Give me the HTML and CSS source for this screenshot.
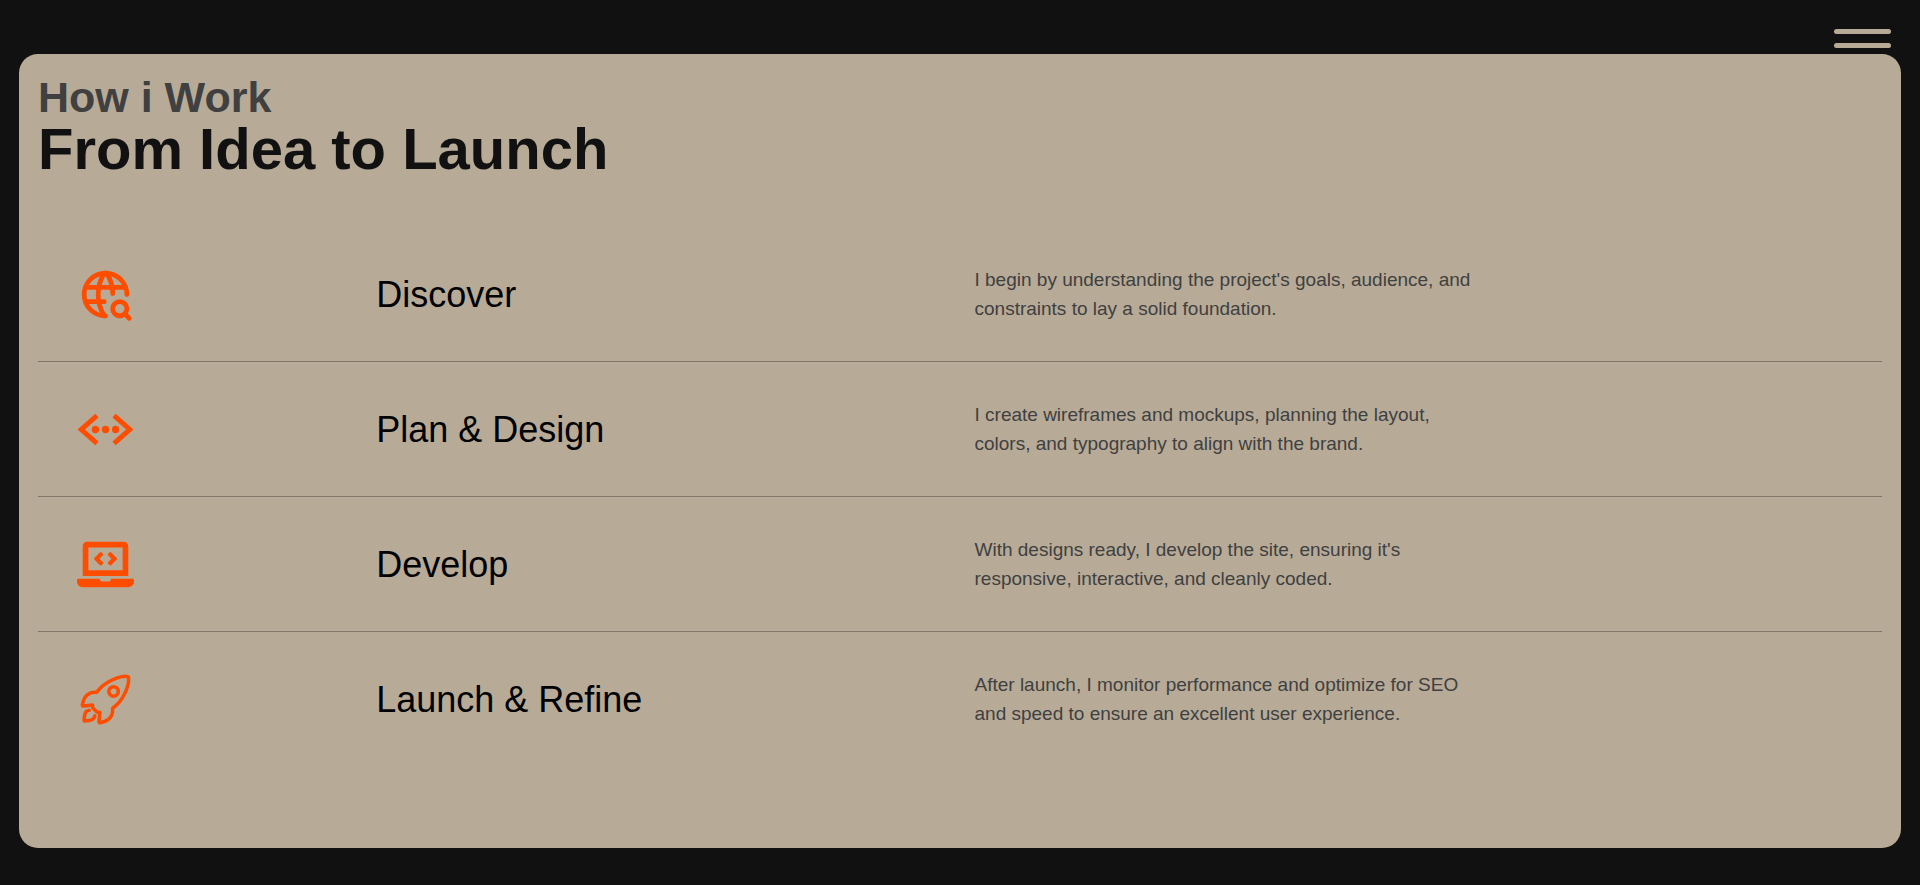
FILE: index.html
```html
<!DOCTYPE html>
<html lang="en">
<head>
<meta charset="utf-8">
<meta name="viewport" content="width=device-width, initial-scale=1">
<title>How i Work</title>
<link rel="stylesheet" href="styles.css">
</head>
<body>
<header class="topbar">
  <button class="menu-button" type="button" aria-label="Open menu">
    <span class="menu-bar"></span>
    <span class="menu-bar"></span>
  </button>
</header>
<main class="card">
  <h2 class="eyebrow">How i Work</h2>
  <h1 class="headline">From Idea to Launch</h1>
  <ol class="steps">
    <li class="step">
      <svg class="step-icon" viewBox="0 0 24 24" fill="none" stroke="currentColor" stroke-width="2" stroke-linecap="round" stroke-linejoin="round" aria-hidden="true">
        <path d="M21 12a9 9 0 1 0 -9 9"/>
        <path d="M3.6 9h16.8"/>
        <path d="M3.6 15h7.9"/>
        <path d="M11.5 3a17 17 0 0 0 0 18"/>
        <path d="M12.5 3a16.984 16.984 0 0 1 2.574 8.62"/>
        <circle cx="18" cy="18" r="3"/>
        <path d="M20.2 20.2l1.8 1.8"/>
      </svg>
      <h3 class="step-title">Discover</h3>
      <p class="step-text">I begin by understanding the project's goals, audience, and constraints to lay a solid foundation.</p>
    </li>
    <li class="step">
      <svg class="step-icon" viewBox="0 0 24 24" fill="none" stroke="currentColor" stroke-width="2.1" aria-hidden="true">
        <path d="M8.4 6.2L1.8 12l6.6 5.8"/>
        <path d="M15.6 6.2l6.6 5.8-6.6 5.8"/>
        <g fill="currentColor" stroke="none">
          <circle cx="7.75" cy="12" r="1.55"/>
          <circle cx="12" cy="12" r="1.55"/>
          <circle cx="16.25" cy="12" r="1.55"/>
        </g>
      </svg>
      <h3 class="step-title">Plan &amp; Design</h3>
      <p class="step-text">I create wireframes and mockups, planning the layout, colors, and typography to align with the brand.</p>
    </li>
    <li class="step">
      <svg class="step-icon" viewBox="0 0 640 512" fill="currentColor" aria-hidden="true">
        <path d="M255.03 261.65c6.25 6.25 16.38 6.25 22.63 0l11.31-11.31c6.25-6.25 6.25-16.38 0-22.63L253.25 192l35.71-35.72c6.25-6.25 6.25-16.38 0-22.63l-11.31-11.31c-6.25-6.25-16.38-6.25-22.63 0l-58.34 58.34c-6.25 6.25-6.25 16.38 0 22.63l58.35 58.34zm96.01-11.3l11.31 11.31c6.25 6.25 16.38 6.25 22.63 0l58.34-58.34c6.25-6.25 6.25-16.38 0-22.63l-58.34-58.34c-6.25-6.25-16.38-6.25-22.63 0l-11.31 11.31c-6.25 6.25-6.25 16.38 0 22.63L386.75 192l-35.71 35.72c-6.25 6.25-6.25 16.38 0 22.63zM624 416H381.54c-.74 19.81-14.71 32-32.74 32H288c-18.69 0-33.02-17.47-32.77-32H16c-8.8 0-16 7.2-16 16v16c0 35.2 28.8 64 64 64h512c35.2 0 64-28.8 64-64v-16c0-8.8-7.2-16-16-16zM576 48c0-26.4-21.6-48-48-48H112C85.6 0 64 21.6 64 48v336h512V48zm-64 272H128V64h384v256z"/>
      </svg>
      <h3 class="step-title">Develop</h3>
      <p class="step-text">With designs ready, I develop the site, ensuring it's responsive, interactive, and cleanly coded.</p>
    </li>
    <li class="step">
      <svg class="step-icon" viewBox="0 0 512 512" fill="none" stroke="currentColor" stroke-width="32" stroke-linecap="round" stroke-linejoin="round" aria-hidden="true">
        <path d="M461.81 53.81a4.4 4.4 0 00-3.3-3.39c-54.38-13.3-180 34.09-248.13 102.17a294.9 294.9 0 00-33.09 39.08c-21-1.9-42-.3-59.88 7.5-50.49 22.2-65.18 80.18-69.28 105.07a9 9 0 009.8 10.4l81.07-8.9a180.29 180.29 0 001.1 18.3 18.15 18.15 0 005.3 11.09l31.39 31.39a18.15 18.15 0 0011.1 5.3 179.91 179.91 0 0018.19 1.1l-8.89 81a9 9 0 0010.39 9.79c24.9-4 83-18.69 105.07-69.17 7.8-17.9 9.4-38.79 7.6-59.69a293.91 293.91 0 0039.19-33.09c68.38-68 115.47-190.86 102.37-247.95zM298.66 213.67a42.7 42.7 0 1160.38 0 42.65 42.65 0 01-60.38 0z"/>
        <path d="M109.64 352a45.06 45.06 0 00-26.35 12.84C65.67 382.52 64 448 64 448s65.52-1.67 83.15-19.31A44.73 44.73 0 00160 402.32"/>
      </svg>
      <h3 class="step-title">Launch &amp; Refine</h3>
      <p class="step-text">After launch, I monitor performance and optimize for SEO and speed to ensure an excellent user experience.</p>
    </li>
  </ol>
</main>
</body>
</html>
```

FILE: styles.css
```css
*,
*::before,
*::after {
  box-sizing: border-box;
}

body {
  display: flex;
  flex-direction: column;
  min-height: 100vh;
  margin: 0;
  background: #111;
  font-family: "Liberation Sans", Arial, sans-serif;
}

.topbar {
  display: flex;
  justify-content: flex-end;
  padding: 29px 29px 6px;
}

.menu-button {
  display: flex;
  flex-direction: column;
  gap: 9px;
  width: 57px;
  padding: 0;
  border: 0;
  background: none;
  cursor: pointer;
}

.menu-bar {
  width: 100%;
  height: 5px;
  border-radius: 3px;
  background: #b7ab98;
}

.card {
  flex: 1;
  margin: 0 19px 37px;
  padding: 19px;
  border-radius: 19px;
  background: #b7ab98;
}

.eyebrow,
.headline,
.step-title,
.step-text {
  margin: 0;
}

.eyebrow {
  color: #404040;
  font-size: 43px;
  line-height: 48px;
}

.headline {
  color: #111;
  font-size: 58px;
  line-height: 56px;
}

.steps {
  margin: 50px 0 0;
  padding: 0;
  list-style: none;
}

.step {
  display: grid;
  grid-template-columns: 1fr 2fr 3fr;
  align-items: center;
  padding: 38px 10px 38px 39px;
  border-bottom: 1px solid #807769;
}

.step:last-child {
  border-bottom: 0;
}

.step-icon {
  width: 57px;
  height: 57px;
  color: #ff4d00;
}

.step-title {
  padding-top: 2px;
  color: #000;
  font-size: 36px;
  font-weight: 400;
  line-height: 42px;
}

.step-text {
  max-width: 500px;
  color: #404040;
  font-size: 19px;
  line-height: 29px;
}
```
